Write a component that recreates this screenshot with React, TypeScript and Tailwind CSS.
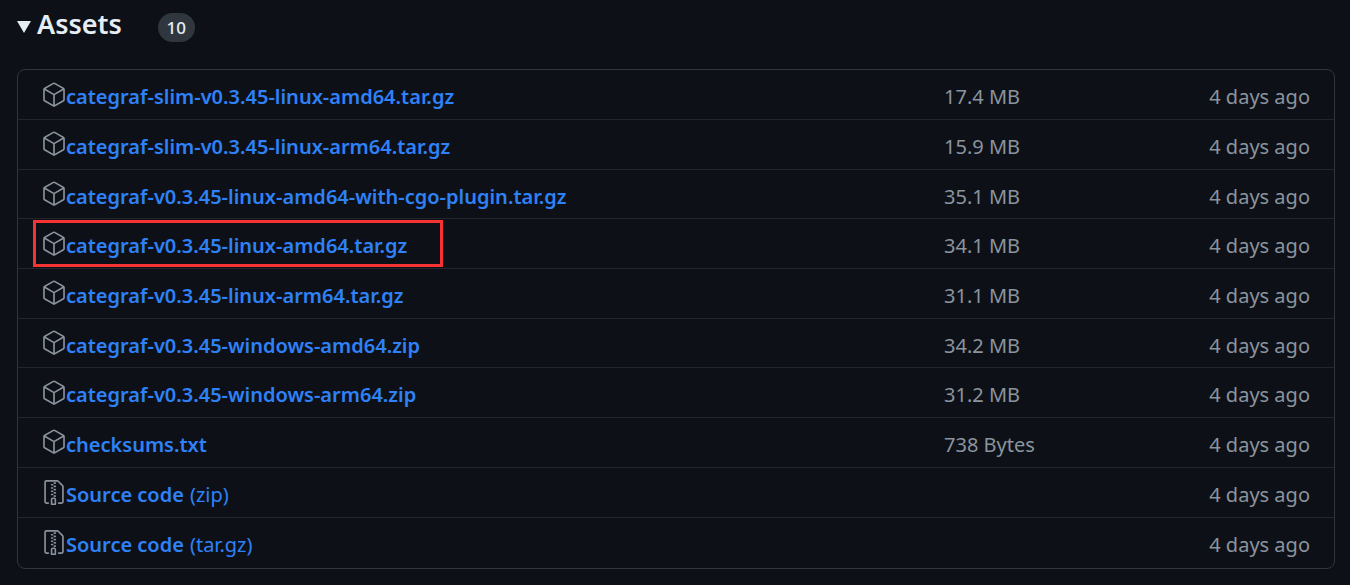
import { GoFileZip, GoPackage } from "react-icons/go";

const assets = [
  { name: "categraf-slim-v0.3.45-linux-amd64.tar.gz", size: "17.4 MB" },
  { name: "categraf-slim-v0.3.45-linux-arm64.tar.gz", size: "15.9 MB" },
  { name: "categraf-v0.3.45-linux-amd64-with-cgo-plugin.tar.gz", size: "35.1 MB" },
  { name: "categraf-v0.3.45-linux-amd64.tar.gz", size: "34.1 MB", marked: true },
  { name: "categraf-v0.3.45-linux-arm64.tar.gz", size: "31.1 MB" },
  { name: "categraf-v0.3.45-windows-amd64.zip", size: "34.2 MB" },
  { name: "categraf-v0.3.45-windows-arm64.zip", size: "31.2 MB" },
  { name: "checksums.txt", size: "738 Bytes" },
  { name: "Source code", ext: "(zip)", size: "" },
  { name: "Source code", ext: "(tar.gz)", size: "" },
];

export default function App() {
  return (
    <main className="h-[585px] w-[1350px] overflow-hidden bg-[#0d1117] pl-[17px] pr-[15px] font-['Noto_Sans',sans-serif] text-[20px]">
      {/* Header */}
      <div className="flex h-[69px] items-start pt-[6px]">
        <svg width="14" height="12" viewBox="0 0 14 12" className="mt-[15px] text-[#e6edf3]">
          <path d="M0 0h14L7 12z" fill="currentColor" />
        </svg>
        <h2 className="ml-[6px] text-[27px] leading-[36px] font-semibold text-[#e6edf3]">Assets</h2>
        <span className="ml-[36px] mt-[7px] flex h-[29px] w-[37px] items-center justify-center rounded-full bg-[#30363d] text-[17px] font-medium text-[#e6edf3]">
          10
        </span>
      </div>

      {/* Asset list */}
      <div className="flex h-[500px] flex-col rounded-lg border border-[#30363d]">
        {assets.map((asset, index) => (
          <div
            key={asset.name + index}
            className={
              "relative flex items-center pl-[23px] pr-[24px] " +
              (index > 0 ? "border-t border-[#21262d] " : "") +
              (index === 0 ? "h-[49px] pt-[5px]" : index === 9 ? "flex-1 pt-[5px] pb-[1px]" : "h-[49.7px] pt-[5px]")
            }
          >
            {asset.marked && (
              <div className="absolute left-[15px] top-[1px] h-[47px] w-[410px] border-[3px] border-[#f53333]" />
            )}
            <div className="flex w-[903px] items-center">
              {asset.ext ? (
                <GoFileZip size={26} className="-mr-[1px] mb-[5px] shrink-0 text-[#8b949e]" />
              ) : (
                <GoPackage size={26} className="-mr-[1px] mb-[5px] shrink-0 text-[#8b949e]" />
              )}
              <a className="whitespace-nowrap font-semibold text-[#2f81f7]">{asset.name}</a>
              {asset.ext && <span className="ml-[6px] text-[#2f81f7]">{asset.ext}</span>}
            </div>
            <span className="text-[#8b949e]">{asset.size}</span>
            <span className="ml-auto text-[#8b949e]">4 days ago</span>
          </div>
        ))}
      </div>
    </main>
  );
}
